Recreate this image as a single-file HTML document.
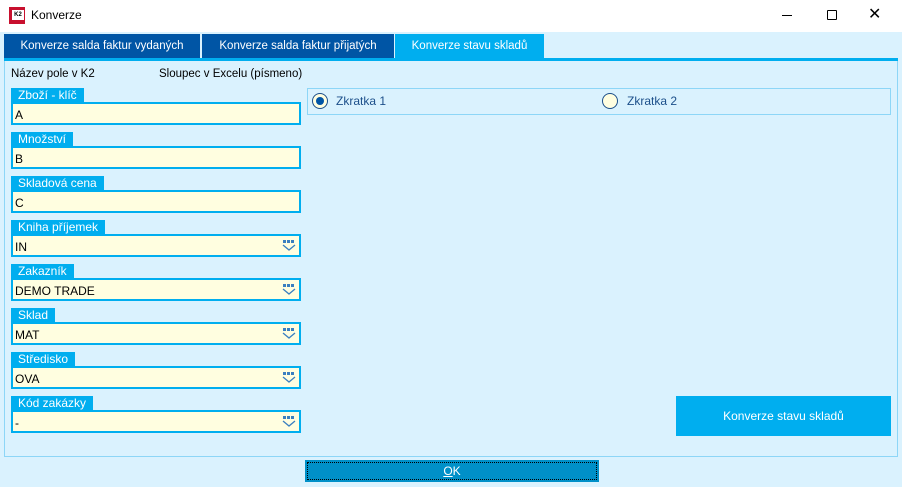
<!DOCTYPE html>
<html><head><meta charset="utf-8"><style>
*{margin:0;padding:0;box-sizing:border-box}
body{width:902px;height:487px;overflow:hidden;background:#fff;font-family:"Liberation Sans",sans-serif;font-size:12px;position:relative}
.a{position:absolute}
.tab{position:absolute;top:34px;height:24px;color:#fff;font-size:11.5px;line-height:24px;text-align:center;background:#0055a5}
.lab{position:absolute;left:11px;height:15px;background:#00aeef;color:#fff;font-size:12px;line-height:15px;padding:0 7px}
.inp{position:absolute;left:11px;width:290px;height:23px;border:2px solid #00aeef;background:#fffee0;font-size:12px;line-height:22px;padding-left:2px;color:#000}
.dd{position:absolute;right:3px;top:4px}
</style></head><body>
<div class="a" style="left:0;top:0;width:902px;height:32px;background:#fff"></div>
<div class="a" style="left:9px;top:7px;width:16px;height:17px;background:#c8102e"></div>
<div class="a" style="left:12px;top:10px;width:12px;height:10px;background:#fff;font-size:6px;font-weight:bold;line-height:10px;text-align:center">K2</div>
<div class="a" style="left:31px;top:8px;font-size:12px">Konverze</div>
<div class="a" style="left:782px;top:15px;width:10px;height:1px;background:#000"></div>
<div class="a" style="left:827px;top:10px;width:10px;height:10px;border:1px solid #000;border-radius:1px"></div>
<div class="a" style="left:868px;top:4px;font-size:16px;color:#000">✕</div>
<div class="a" style="left:0;top:32px;width:902px;height:455px;background:#daf2fe"></div>
<div class="tab" style="left:4px;width:196px">Konverze salda faktur vydaných</div>
<div class="tab" style="left:202px;width:192px">Konverze salda faktur přijatých</div>
<div class="tab" style="left:395px;width:149px;background:#00aeef">Konverze stavu skladů</div>
<div class="a" style="left:4px;top:58px;width:894px;height:3px;background:#00aeef"></div>
<div class="a" style="left:4px;top:61px;width:894px;height:396px;border:1px solid #8dd6f7;border-top:none"></div>
<div class="a" style="left:11px;top:68px;font-size:11.5px">Název pole v K2</div>
<div class="a" style="left:159px;top:68px;font-size:11.5px">Sloupec v Excelu (písmeno)</div>

<div class="lab" style="top:88px">Zboží - klíč</div><div class="inp" style="top:102px">A</div>
<div class="lab" style="top:132px">Množství</div><div class="inp" style="top:146px">B</div>
<div class="lab" style="top:176px">Skladová cena</div><div class="inp" style="top:190px">C</div>
<div class="lab" style="top:220px">Kniha příjemek</div><div class="inp" style="top:234px">IN<svg class="dd" width="14" height="12"><rect x="1" y="0" width="3" height="3" fill="#3a7fc0"/><rect x="5" y="0" width="3" height="3" fill="#3a7fc0"/><rect x="9" y="0" width="3" height="3" fill="#3a7fc0"/><path d="M1 5l6 5 6-5" stroke="#3a7fc0" fill="none" stroke-width="1.3"/></svg></div>
<div class="lab" style="top:264px">Zakazník</div><div class="inp" style="top:278px">DEMO TRADE<svg class="dd" width="14" height="12"><rect x="1" y="0" width="3" height="3" fill="#3a7fc0"/><rect x="5" y="0" width="3" height="3" fill="#3a7fc0"/><rect x="9" y="0" width="3" height="3" fill="#3a7fc0"/><path d="M1 5l6 5 6-5" stroke="#3a7fc0" fill="none" stroke-width="1.3"/></svg></div>
<div class="lab" style="top:308px">Sklad</div><div class="inp" style="top:322px">MAT<svg class="dd" width="14" height="12"><rect x="1" y="0" width="3" height="3" fill="#3a7fc0"/><rect x="5" y="0" width="3" height="3" fill="#3a7fc0"/><rect x="9" y="0" width="3" height="3" fill="#3a7fc0"/><path d="M1 5l6 5 6-5" stroke="#3a7fc0" fill="none" stroke-width="1.3"/></svg></div>
<div class="lab" style="top:352px">Středisko</div><div class="inp" style="top:366px">OVA<svg class="dd" width="14" height="12"><rect x="1" y="0" width="3" height="3" fill="#3a7fc0"/><rect x="5" y="0" width="3" height="3" fill="#3a7fc0"/><rect x="9" y="0" width="3" height="3" fill="#3a7fc0"/><path d="M1 5l6 5 6-5" stroke="#3a7fc0" fill="none" stroke-width="1.3"/></svg></div>
<div class="lab" style="top:396px">Kód zakázky</div><div class="inp" style="top:410px">-<svg class="dd" width="14" height="12"><rect x="1" y="0" width="3" height="3" fill="#3a7fc0"/><rect x="5" y="0" width="3" height="3" fill="#3a7fc0"/><rect x="9" y="0" width="3" height="3" fill="#3a7fc0"/><path d="M1 5l6 5 6-5" stroke="#3a7fc0" fill="none" stroke-width="1.3"/></svg></div>

<div class="a" style="left:307px;top:88px;width:584px;height:27px;border:1px solid #8dd6f7"></div>
<div class="a" style="left:312px;top:93px;width:16px;height:16px;border:1px solid #1c4f8a;border-radius:50%;background:#fffee0"></div>
<div class="a" style="left:316px;top:97px;width:8px;height:8px;border-radius:50%;background:#0055a5"></div>
<div class="a" style="left:336px;top:94px;color:#1c4f8a;font-size:12px">Zkratka 1</div>
<div class="a" style="left:602px;top:93px;width:16px;height:16px;border:1px solid #1c4f8a;border-radius:50%;background:#fffee0"></div>
<div class="a" style="left:627px;top:94px;color:#1c4f8a;font-size:12px">Zkratka 2</div>

<div class="a" style="left:676px;top:396px;width:215px;height:40px;background:#00aeef;color:#fff;text-align:center;line-height:40px;font-size:12px">Konverze stavu skladů</div>
<div class="a" style="left:305px;top:460px;width:294px;height:22px;background:#0090c8;border:2px solid #0090c8;outline:1px dotted #000;outline-offset:-3px;color:#fff;text-align:center;line-height:18px;font-size:12px"><u>O</u>K</div>
</body></html>
